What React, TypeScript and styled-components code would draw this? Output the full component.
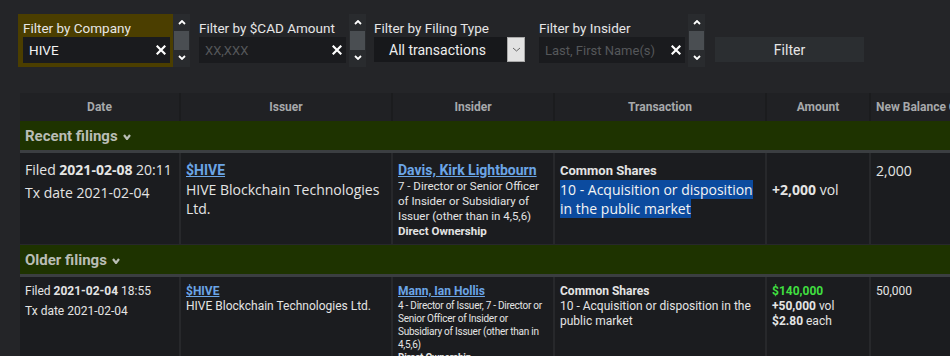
import React from 'react'
import styled, { createGlobalStyle } from 'styled-components'

type Filing = {
  filed: string
  time: string
  txDate: string
  ticker: string
  issuer: string
  insider: string
  roles: string
  ownership: string
  security: string
  nature: string
  value?: string
  volume: string
  price?: string
  balance: string
}

const recentFilings: Filing[] = [
  {
    filed: '2021-02-08',
    time: '20:11',
    txDate: '2021-02-04',
    ticker: '$HIVE',
    issuer: 'HIVE Blockchain Technologies Ltd.',
    insider: 'Davis, Kirk Lightbourn',
    roles: '7 - Director or Senior Officer of Insider or Subsidiary of Issuer (other than in 4,5,6)',
    ownership: 'Direct Ownership',
    security: 'Common Shares',
    nature: '10 - Acquisition or disposition in the public market',
    volume: '+2,000',
    balance: '2,000',
  },
]

const olderFilings: Filing[] = [
  {
    filed: '2021-02-04',
    time: '18:55',
    txDate: '2021-02-04',
    ticker: '$HIVE',
    issuer: 'HIVE Blockchain Technologies Ltd.',
    insider: 'Mann, Ian Hollis',
    roles:
      '4 - Director of Issuer, 7 - Director or Senior Officer of Insider or Subsidiary of Issuer (other than in 4,5,6)',
    ownership: 'Direct Ownership',
    security: 'Common Shares',
    nature: '10 - Acquisition or disposition in the public market',
    value: '$140,000',
    volume: '+50,000',
    price: '$2.80',
    balance: '50,000',
  },
]

const columns = [
  { title: 'Date', width: 161 },
  { title: 'Issuer', width: 212 },
  { title: 'Insider', width: 162 },
  { title: 'Transaction', width: 212 },
  { title: 'Amount', width: 104 },
  { title: 'New Balance Common Shares', width: 200, left: true },
]

const ClearIcon = () => (
  <svg width="10" height="10" viewBox="0 0 10 10">
    <path d="M1.5 1.5 L8.5 8.5 M8.5 1.5 L1.5 8.5" stroke="#fff" strokeWidth="2.2" strokeLinecap="square" />
  </svg>
)

const Chevron = ({ up, color = '#fff', w = 8, h = 5, sw = 1.8 }: { up?: boolean; color?: string; w?: number; h?: number; sw?: number }) => (
  <svg width={w} height={h} viewBox={`0 0 ${w} ${h}`}>
    <polyline
      points={up ? `1,${h - 1} ${w / 2},1 ${w - 1},${h - 1}` : `1,1 ${w / 2},${h - 1} ${w - 1},1`}
      fill="none"
      stroke={color}
      strokeWidth={sw}
    />
  </svg>
)

const Spinner = () => (
  <SpinnerTrack>
    <Chevron up />
    <Thumb />
    <Chevron />
  </SpinnerTrack>
)

export default function App() {
  return (
    <>
      <GlobalStyle />
      <Page>
        <FilterBar>
          <Field $active>
            <Label>Filter by Company</Label>
            <InputBox $width={147}>
              <TextInput defaultValue="HIVE" />
              <ClearIcon />
            </InputBox>
          </Field>
          <Spinner />
          <Field $gap={4}>
            <Label>Filter by $CAD Amount</Label>
            <InputBox $width={147}>
              <TextInput placeholder="XX,XXX" />
              <ClearIcon />
            </InputBox>
          </Field>
          <Spinner />
          <Field $gap={3}>
            <Label>Filter by Filing Type</Label>
            <SelectBox>
              <SelectText>All transactions</SelectText>
              <DropButton>
                <Chevron color="#666" w={9} h={5} sw={1} />
              </DropButton>
            </SelectBox>
          </Field>
          <Field $gap={6}>
            <Label>Filter by Insider</Label>
            <InputBox $width={146}>
              <TextInput placeholder="Last, First Name(s)" />
              <ClearIcon />
            </InputBox>
          </Field>
          <Spinner />
          <FilterButton>Filter</FilterButton>
        </FilterBar>

        <Table>
          <thead>
            <tr>
              {columns.map((c) => (
                <HeadCell key={c.title} style={{ width: c.width }} $left={c.left}>
                  {c.title}
                </HeadCell>
              ))}
            </tr>
          </thead>
          <tbody>
            <GroupRow title="Recent filings" />
            {recentFilings.map((f, i) => (
              <FilingRow key={i} filing={f} recent />
            ))}
            <GroupRow title="Older filings" />
            {olderFilings.map((f, i) => (
              <FilingRow key={i} filing={f} />
            ))}
          </tbody>
        </Table>
      </Page>
    </>
  )
}

const GroupRow = ({ title }: { title: string }) => (
  <tr>
    <GroupCell colSpan={6}>
      {title}
      <GroupChevron>
        <Chevron w={8} h={6} sw={2.2} color="#b9bdb5" />
      </GroupChevron>
    </GroupCell>
  </tr>
)

const FilingRow = ({ filing, recent }: { filing: Filing; recent?: boolean }) => (
  <tr>
    <Cell $recent={recent}>
      <DateBlock $recent={recent}>
        <div>
          Filed <b>{filing.filed}</b> {filing.time}
        </div>
        <div>Tx date {filing.txDate}</div>
      </DateBlock>
    </Cell>
    <Cell $recent={recent}>
      <Link $recent={recent} href="#">
        {filing.ticker}
      </Link>
      <IssuerName $recent={recent}>{filing.issuer}</IssuerName>
    </Cell>
    <Cell $recent={recent}>
      <InsiderLink $recent={recent} href="#">
        {filing.insider}
      </InsiderLink>
      <Roles $recent={recent}>
        {filing.roles}
        <br />
        <b>{filing.ownership}</b>
      </Roles>
    </Cell>
    <Cell $recent={recent}>
      <Security $recent={recent}>{filing.security}</Security>
      <Nature $recent={recent}>{recent ? <Selected>{filing.nature}</Selected> : filing.nature}</Nature>
    </Cell>
    <Cell $recent={recent}>
      <AmountText $recent={recent}>
        <Money>{filing.value ?? '\u00a0'}</Money>
        <div>
          <b>{filing.volume}</b> vol
        </div>
        {filing.price && (
          <div>
            <b>{filing.price}</b> each
          </div>
        )}
      </AmountText>
    </Cell>
    <Cell $recent={recent}>
      <AmountText $recent={recent}>{filing.balance}</AmountText>
    </Cell>
  </tr>
)

const GlobalStyle = createGlobalStyle`
  html, body {
    margin: 0;
    padding: 0;
    background: #242528;
    overflow: hidden;
  }
  body {
    width: 950px;
    height: 356px;
    font-family: Roboto, 'Liberation Sans', sans-serif;
    color: #e4e4e4;
  }
`

const Page = styled.div`
  padding: 14px 0 0 18px;
`

const FilterBar = styled.div`
  display: flex;
  align-items: flex-start;
`

const Field = styled.div<{ $active?: boolean; $gap?: number }>`
  box-sizing: border-box;
  height: 53px;
  padding: 5px 3px 4px 5px;
  margin-left: ${(p) => p.$gap ?? 0}px;
  background: ${(p) => (p.$active ? '#4b3e00' : 'transparent')};
`

const Label = styled.div`
  font-size: 13.5px;
  line-height: 18px;
  color: #e6e6e6;
  white-space: nowrap;
`

const InputBox = styled.div<{ $width: number }>`
  box-sizing: border-box;
  display: flex;
  align-items: center;
  width: ${(p) => p.$width}px;
  height: 26px;
  padding: 0 4px 0 6px;
  background: #1a1b1e;
`

const TextInput = styled.input`
  flex: 1;
  min-width: 0;
  padding: 0;
  border: none;
  outline: none;
  background: transparent;
  font-family: Roboto, 'Liberation Sans', sans-serif;
  font-size: 13.5px;
  color: #f2f2f2;
  &::placeholder {
    color: #55575a;
    font-size: 13px;
  }
`

const SpinnerTrack = styled.div`
  box-sizing: border-box;
  width: 17px;
  height: 53px;
  padding-top: 6px;
  background: #292b2e;
  display: flex;
  flex-direction: column;
  align-items: center;
  svg {
    display: block;
  }
`

const Thumb = styled.div`
  width: 15px;
  height: 19px;
  margin: 6px 0 5px;
  background: #4a4e52;
`

const SelectBox = styled.div`
  box-sizing: border-box;
  display: flex;
  align-items: center;
  width: 151px;
  height: 25px;
  background: #17181b;
`

const SelectText = styled.span`
  flex: 1;
  padding-left: 15px;
  font-size: 14px;
  color: #eeeeee;
`

const DropButton = styled.div`
  box-sizing: border-box;
  width: 18px;
  height: 25px;
  display: flex;
  align-items: center;
  justify-content: center;
  background: #e2e2e2;
  border: 1px solid #a9a9a9;
`

const FilterButton = styled.button`
  margin: 23px 0 0 10px;
  width: 149px;
  height: 25px;
  border: none;
  background: #2b2e31;
  font-family: Roboto, 'Liberation Sans', sans-serif;
  font-size: 14px;
  color: #e6e6e6;
`

const Table = styled.table`
  margin: 26px 0 0 2px;
  border-collapse: separate;
  border-spacing: 0;
  table-layout: fixed;
  width: 1051px;
`

const HeadCell = styled.th<{ $left?: boolean }>`
  box-sizing: border-box;
  height: 28px;
  padding: 0 5px;
  background: #202124;
  border-right: 2px solid #1b1c1e;
  font-size: 12px;
  font-weight: 700;
  color: #a7a9ab;
  text-align: ${(p) => (p.$left ? 'left' : 'center')};
  white-space: nowrap;
  overflow: hidden;
`

const GroupCell = styled.td`
  box-sizing: border-box;
  height: 32px;
  padding: 0 5px;
  background: #1e3300;
  border-bottom: 3px solid #3b3e41;
  font-size: 15px;
  font-weight: 700;
  color: #b9bdb5;
`

const GroupChevron = styled.span`
  display: inline-block;
  margin-left: 5px;
  vertical-align: 1px;
`

const Cell = styled.td<{ $recent?: boolean }>`
  box-sizing: border-box;
  vertical-align: top;
  padding: ${(p) => (p.$recent ? '8px 5px 5px' : '7px 5px 5px')};
  background: #1b1c1f;
  border-right: 2px solid #27282b;
  border-bottom: 1px solid #27282b;
`

const DateBlock = styled.div<{ $recent?: boolean }>`
  margin-top: -3px;
  font-family: ${(p) => (p.$recent ? "'Open Sans'" : 'Roboto')}, sans-serif;
  font-size: ${(p) => (p.$recent ? 14 : 12)}px;
  line-height: ${(p) => (p.$recent ? 23 : 20)}px;
  white-space: nowrap;
`

const Link = styled.a<{ $recent?: boolean }>`
  display: block;
  font-size: ${(p) => (p.$recent ? 14 : 12)}px;
  line-height: ${(p) => (p.$recent ? 19 : 15)}px;
  font-weight: 700;
  color: #6ba5e6;
  text-decoration: underline;
  width: fit-content;
`

const InsiderLink = styled(Link)`
  font-size: ${(p) => (p.$recent ? 14 : 12)}px;
  line-height: ${(p) => (p.$recent ? 18 : 15)}px;
  white-space: nowrap;
`

const IssuerName = styled.div<{ $recent?: boolean }>`
  font-family: ${(p) => (p.$recent ? "'Open Sans'" : 'Roboto')}, sans-serif;
  font-size: ${(p) => (p.$recent ? 14 : 12)}px;
  line-height: ${(p) => (p.$recent ? 19 : 15)}px;
`

const Roles = styled.div<{ $recent?: boolean }>`
  font-size: ${(p) => (p.$recent ? 11.5 : 10)}px;
  line-height: ${(p) => (p.$recent ? 15 : 13)}px;
  letter-spacing: ${(p) => (p.$recent ? 0 : -0.25)}px;
`

const Security = styled.div<{ $recent?: boolean }>`
  font-size: ${(p) => (p.$recent ? 13 : 12)}px;
  line-height: ${(p) => (p.$recent ? 19 : 15)}px;
  font-weight: 700;
`

const Nature = styled.div<{ $recent?: boolean }>`
  font-family: ${(p) => (p.$recent ? "'Open Sans'" : 'Roboto')}, sans-serif;
  font-size: ${(p) => (p.$recent ? 14 : 12)}px;
  line-height: ${(p) => (p.$recent ? 19 : 15)}px;
`

const Selected = styled.span`
  background: #0c4b9f;
  color: #f4f4f4;
`

const AmountText = styled.div<{ $recent?: boolean }>`
  font-family: ${(p) => (p.$recent ? "'Open Sans'" : 'Roboto')}, sans-serif;
  font-size: ${(p) => (p.$recent ? 14 : 12)}px;
  line-height: ${(p) => (p.$recent ? 19 : 15)}px;
  white-space: nowrap;
`

const Money = styled.div`
  font-weight: 700;
  color: #40df40;
`
